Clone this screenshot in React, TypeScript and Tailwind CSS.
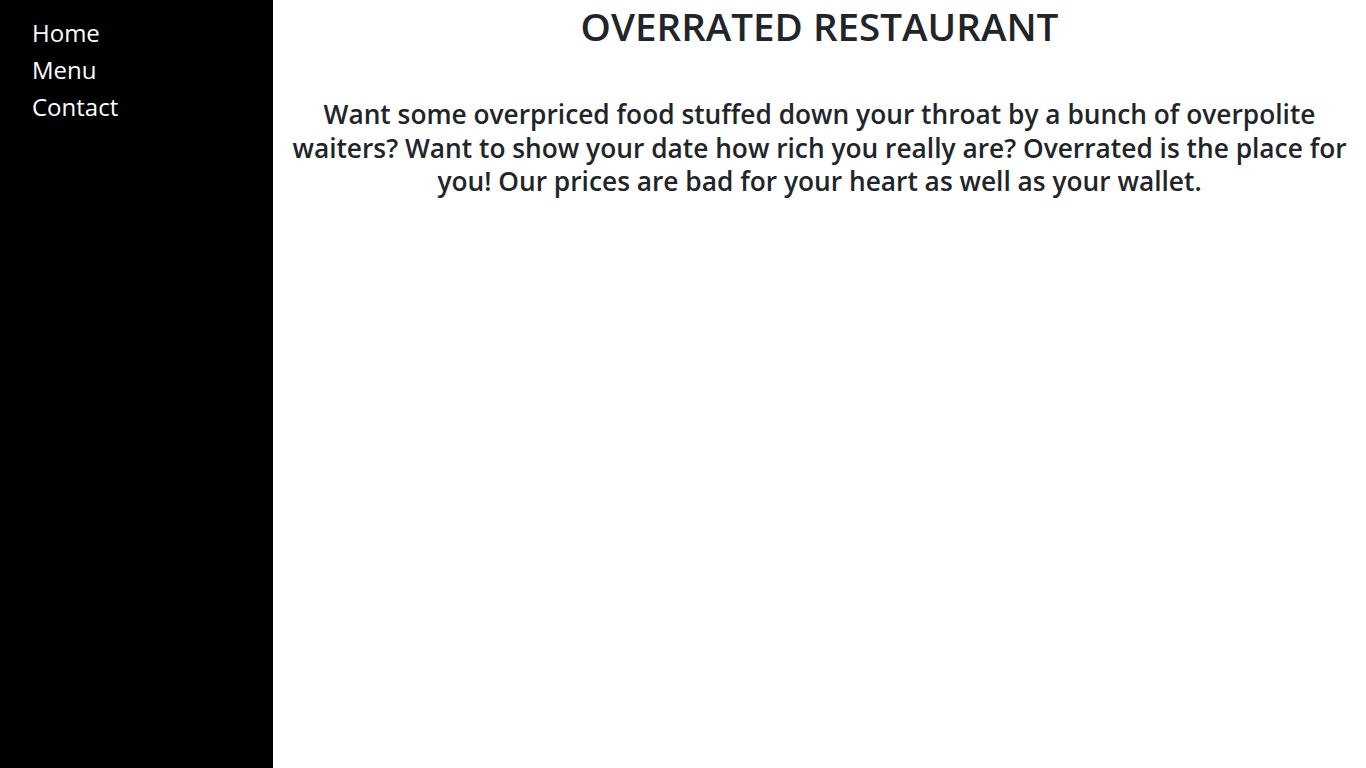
export default function App() {
  const links = ['Home', 'Menu', 'Contact']

  return (
    <div className="flex min-h-[768px] w-full bg-white font-['Open_Sans',sans-serif]">
      {/* Sidebar */}
      <nav className="w-[273px] shrink-0 bg-black pt-[14px] pl-[32px]">
        <ul className="flex flex-col">
          {links.map((l) => (
            <li key={l}>
              <a href="#" className="text-[24px] leading-[37px] text-white">
                {l}
              </a>
            </li>
          ))}
        </ul>
      </nav>

      {/* Main */}
      <main className="flex-1 px-[15px] text-center text-[#212529]">
        <h1 className="text-[38.6px] font-semibold leading-[52px]">OVERRATED RESTAURANT</h1>
        <p className="mt-[46px] text-[26.3px] font-semibold leading-[33.5px]">
          Want some overpriced food stuffed down your throat by a bunch of overpolite waiters? Want
          to show your date how rich you really are? Overrated is the place for you! Our prices are
          bad for your heart as well as your wallet.
        </p>
      </main>
    </div>
  )
}
